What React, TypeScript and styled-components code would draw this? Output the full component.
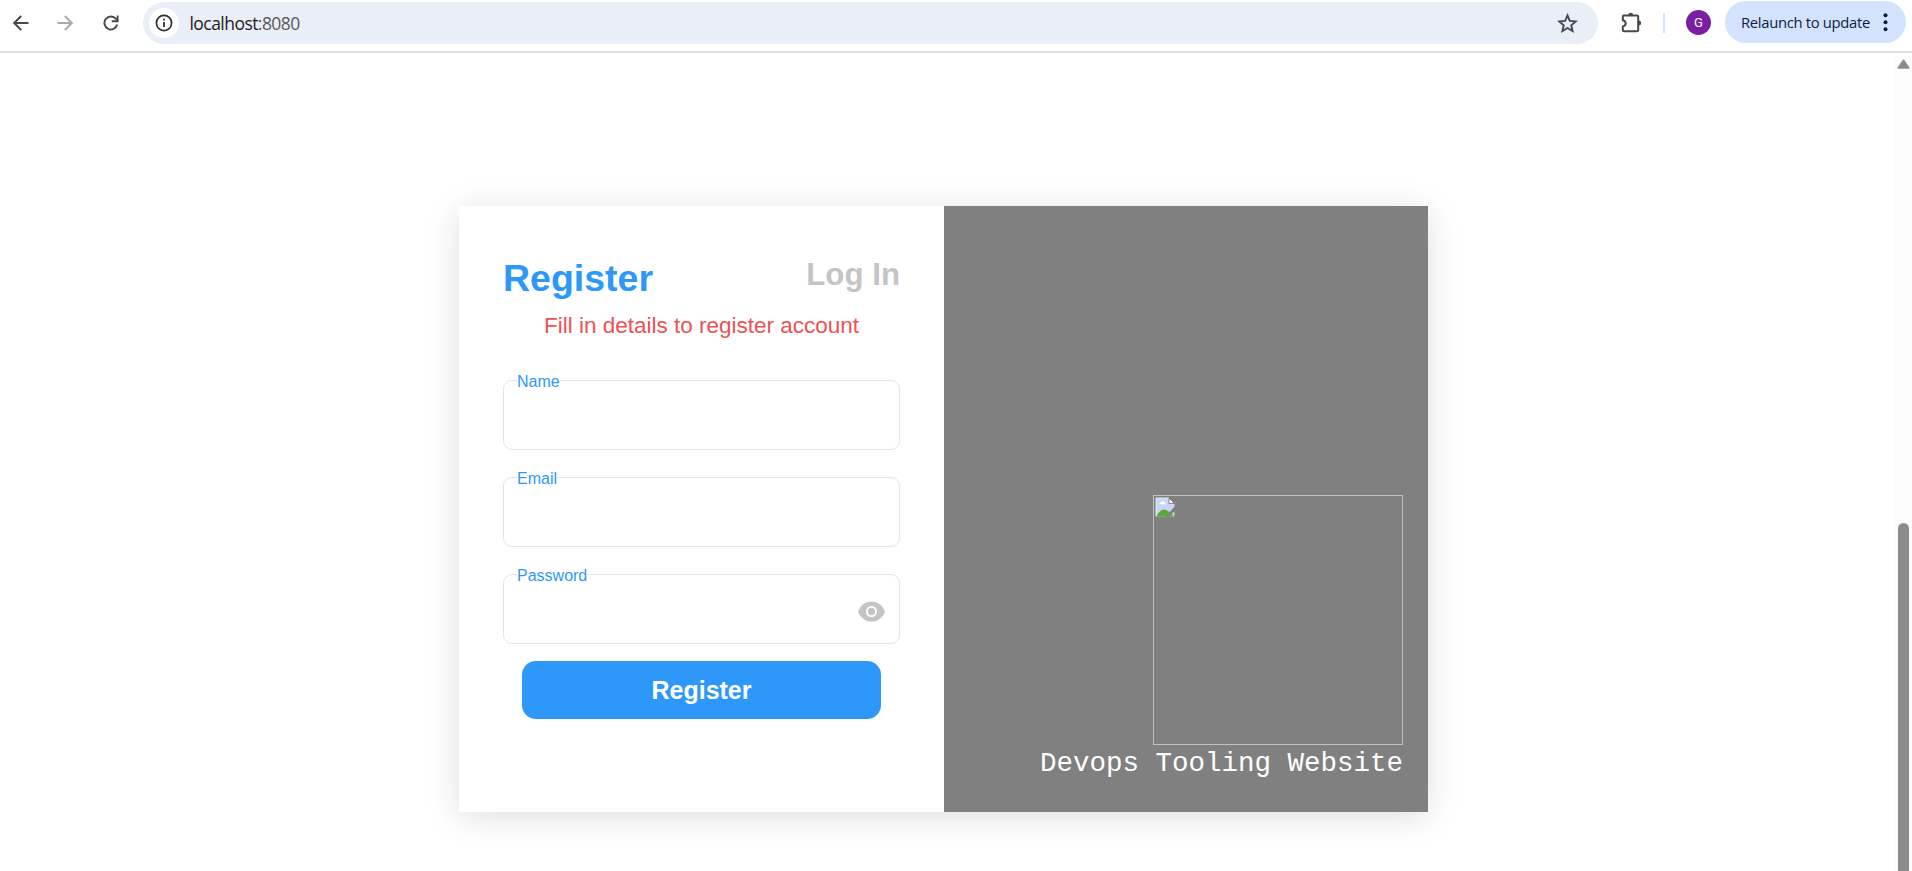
import React from "react";
import styled, { createGlobalStyle } from "styled-components";

const GlobalStyle = createGlobalStyle`
  * { box-sizing: border-box; }
  body { margin: 0; background: #fff; overflow: hidden; }
`;

const sans = `"Liberation Sans", Arial, sans-serif`;
const chromeFont = `"Open Sans", "Noto Sans", sans-serif`;

const Browser = styled.div`
  display: flex;
  flex-direction: column;
  height: 871px;
  font-family: ${sans};
`;

const Toolbar = styled.header`
  display: flex;
  align-items: flex-start;
  flex: none;
  height: 53px;
  padding: 1px 6px 0 8px;
  border-bottom: 2px solid #dfdfdf;
`;

const IconButton = styled.button<{ $color?: string; $width: number }>`
  display: flex;
  align-items: center;
  justify-content: center;
  flex: none;
  width: ${(p) => p.$width}px;
  height: 43px;
  padding: 0;
  border: 0;
  background: none;
  color: ${(p) => p.$color ?? "#47484a"};
`;

const ExtensionsButton = styled(IconButton)`
  padding-left: 3px;
`;

const NavGroup = styled.nav`
  display: flex;
  width: 135px;
  flex: none;
  gap: 21px;
`;

const Omnibox = styled.div`
  display: flex;
  align-items: center;
  flex: none;
  width: 1455px;
  height: 42px;
  margin-top: 1px;
  padding: 0 20px 0 6px;
  border-radius: 21px;
  background: #e9eef7;
`;

const SiteInfo = styled.span`
  display: flex;
  align-items: center;
  justify-content: center;
  width: 30px;
  height: 30px;
  border-radius: 50%;
  background: #fff;
`;

const Address = styled.span`
  flex: 1;
  margin-left: 10.5px;
  font: 17.5px/24px ${chromeFont};
  letter-spacing: -0.55px;
  color: #1f2023;
`;

const Port = styled.span`
  color: #55585d;
`;

const Divider = styled.span`
  flex: none;
  width: 2px;
  height: 20px;
  margin: 12px 21px 0 0;
  background: #d3e3fd;
`;

const Avatar = styled.span`
  flex: none;
  width: 25px;
  height: 25px;
  margin: 9px 14px 0 0;
  border-radius: 50%;
  background: #7b1fa2;
  color: #fff;
  font: 13px/25px Roboto, sans-serif;
  text-align: center;
`;

const Relaunch = styled.button`
  display: flex;
  align-items: center;
  justify-content: space-between;
  flex: none;
  width: 181px;
  height: 42px;
  padding: 0 18px 0 16px;
  border: 0;
  border-radius: 21px;
  background: #d3e3fd;
  color: #0b1d47;
  font: 14.8px/20px ${chromeFont};
  letter-spacing: -0.31px;
  white-space: nowrap;
`;

const Viewport = styled.div`
  display: flex;
  flex: 1;
  min-height: 0;
`;

const Page = styled.main`
  flex: 1;
  padding: 153px 0 0 459px;
`;

const Scrollbar = styled.aside`
  display: flex;
  flex-direction: column;
  align-items: center;
  width: 18px;
  padding: 6px 0 0 1px;
  background: #fcfcfc;
`;

const Thumb = styled.div`
  flex: 1;
  width: 11px;
  margin-top: 454px;
  border-radius: 6px 6px 0 0;
  background: #8b8b8b;
`;

const Card = styled.section`
  display: flex;
  width: 969px;
  height: 606px;
  background: #fff;
  box-shadow: 0 5px 31px rgba(0, 0, 0, 0.13);
`;

const FormPanel = styled.form`
  display: flex;
  flex-direction: column;
  width: 485px;
  padding: 50px 44px 0;
`;

const TabRow = styled.div`
  display: flex;
  justify-content: space-between;
  align-items: flex-start;
  height: 56px;
`;

const Tab = styled.h1<{ $active?: boolean }>`
  margin: 0;
  font-weight: 700;
  font-size: ${(p) => (p.$active ? 37.5 : 31.25)}px;
  line-height: ${(p) => (p.$active ? 44 : 38)}px;
  color: ${(p) => (p.$active ? "#2d98fa" : "#c4c4c4")};
`;

const Hint = styled.p`
  margin: 0 0 40px;
  font-size: 22.5px;
  line-height: 28px;
  text-align: center;
  color: #ec5252;
`;

const Fields = styled.div`
  display: flex;
  flex-direction: column;
  gap: 27px;
`;

const Field = styled.div`
  position: relative;
  display: flex;
  align-items: center;
  justify-content: flex-end;
  height: 70px;
  padding: 4px 14px 0 0;
  border: 1px solid #e4e4e4;
  border-radius: 9px;
`;

const Label = styled.label`
  position: absolute;
  top: -7px;
  left: 13px;
  background: #fff;
  font-size: 16px;
  line-height: 16px;
  color: #2d98fa;
`;

const Submit = styled.button`
  height: 58px;
  margin: 17px 19px 0;
  padding: 0;
  border: 0;
  border-radius: 14px;
  background: #2d98fa;
  color: #fff;
  font: 700 25px/58px ${sans};
`;

const BrandPanel = styled.div`
  display: flex;
  flex-direction: column;
  align-items: flex-end;
  justify-content: flex-end;
  flex: 1;
  padding: 0 25px 30px 0;
  background: #808080;
`;

const MissingImage = styled.div`
  width: 250px;
  height: 250px;
  padding: 1px;
  border: 1px solid #c0c0c0;
`;

const BrokenIcon = styled.svg`
  display: block;
`;

const BrandName = styled.p`
  margin: 1px 0 0;
  font: 27.5px/36px "Liberation Mono", monospace;
  color: #fff;
`;

const Arrow = ({ flip = false }: { flip?: boolean }) => (
  <svg width="16" height="16" viewBox="0 0 16 16" fill="none" stroke="currentColor" strokeWidth="1.9">
    <path d={flip ? "M0.5 8H14.5M7.8 1L14.8 8L7.8 15" : "M15.5 8H1.5M8.2 1L1.2 8L8.2 15"} />
  </svg>
);

const Reload = () => (
  <svg width="16" height="16" viewBox="0 0 16 16" fill="none" stroke="currentColor" strokeWidth="1.9">
    <path d="M14.2 9.6A6.5 6.5 0 1 1 13 3.9L14.5 5.6" />
    <path d="M14.6 0.5V6.2H8.8" />
  </svg>
);

const Info = () => (
  <svg width="18" height="18" viewBox="0 0 18 18" fill="none" stroke="#303134">
    <circle cx="9" cy="9" r="7.6" strokeWidth="1.7" />
    <path d="M9 8V13M9 4.8V6.6" strokeWidth="1.8" />
  </svg>
);

const Star = () => (
  <svg width="21" height="21" viewBox="0 0 19 19" fill="none" stroke="#47484a" strokeWidth="1.7">
    <path d="M9.5 2.2L11.6 7.1L17 7.6L12.9 11.1L14.1 16.4L9.5 13.6L4.9 16.4L6.1 11.1L2 7.6L7.4 7.1Z" />
  </svg>
);

const Puzzle = () => (
  <svg width="22" height="21" viewBox="0 0 22 21">
    <path
      d="M3 3.6H16Q17.2 3.6 17.2 4.8V18Q17.2 19.2 16 19.2H3Q1.8 19.2 1.8 18V14.5Q4.7 13.8 4.7 11.3Q4.7 8.9 1.8 8.2V4.8Q1.8 3.6 3 3.6Z"
      fill="none"
      stroke="#47484a"
      strokeWidth="2"
      strokeLinejoin="round"
    />
    <path d="M7.2 3.2a2.5 2.5 0 0 1 5 0ZM17.6 8.6a2.5 2.5 0 0 1 0 5Z" fill="#47484a" />
  </svg>
);

const Dots = () => (
  <svg width="5" height="19" viewBox="0 0 5 19" fill="currentColor">
    <circle cx="2.5" cy="2.3" r="2" />
    <circle cx="2.5" cy="9.3" r="2" />
    <circle cx="2.5" cy="16.3" r="2" />
  </svg>
);

const Eye = () => (
  <svg width="27" height="21" viewBox="0 0 27 21">
    <path d="M0 10.5C2.2 4.4 7.4 0.4 13.5 0.4S24.8 4.4 27 10.5C24.8 16.6 19.6 20.6 13.5 20.6S2.2 16.6 0 10.5Z" fill="#c4c4c4" />
    <circle cx="13.5" cy="10.5" r="4.6" fill="none" stroke="#fff" strokeWidth="1.8" />
  </svg>
);

const BrokenImage = () => (
  <BrokenIcon width="20" height="20" viewBox="0 0 20 20">
    <path d="M1 1H14L19.5 6.5V11L11 19.5H1Z" fill="#c6d8f5" />
    <path d="M1 19.5V1H14" fill="none" stroke="#e4e8f0" />
    <path d="M4 7.3Q4.3 5.4 6 5.5Q7 3.6 8.6 4.6Q10 4.8 10 6Q11.3 6.2 11.2 7.3Z" fill="#fff" />
    <path d="M1.5 19.4C3 16 6 12.4 9.5 12.6Q12.8 12.9 15 15.5L11 19.4Z" fill="#58ab36" />
    <path d="M14 1V6.5H19.5Z" fill="#fff" stroke="#777" strokeWidth="0.9" />
    <path d="M20 10.8L11.6 19.8" stroke="#808080" strokeWidth="2.2" />
    <path d="M19.3 14.5V19.4H14.3Z" fill="#c6d8f5" />
    <path d="M16.5 16.6L18.8 19.4H14.6Z" fill="#58ab36" />
  </BrokenIcon>
);

const ScrollUp = () => (
  <svg width="13" height="10" viewBox="0 0 13 10">
    <path d="M6.5 1.5L11.5 8.8H1.5Z" fill="#8b8b8b" stroke="#8b8b8b" strokeWidth="2" strokeLinejoin="round" />
  </svg>
);

export default function App() {
  return (
    <Browser>
      <GlobalStyle />
      <Toolbar>
        <NavGroup>
          <IconButton $width={25} aria-label="Back"><Arrow /></IconButton>
          <IconButton $width={22} $color="#a9aaab" aria-label="Forward"><Arrow flip /></IconButton>
          <IconButton $width={27} aria-label="Reload"><Reload /></IconButton>
        </NavGroup>
        <Omnibox>
          <SiteInfo><Info /></SiteInfo>
          <Address>localhost<Port>:8080</Port></Address>
          <Star />
        </Omnibox>
        <ExtensionsButton $width={65} aria-label="Extensions"><Puzzle /></ExtensionsButton>
        <Divider />
        <Avatar>G</Avatar>
        <Relaunch>Relaunch to update<Dots /></Relaunch>
      </Toolbar>
      <Viewport>
        <Page>
          <Card>
            <FormPanel>
              <TabRow>
                <Tab $active>Register</Tab>
                <Tab>Log In</Tab>
              </TabRow>
              <Hint>Fill in details to register account</Hint>
              <Fields>
                <Field><Label>Name</Label></Field>
                <Field><Label>Email</Label></Field>
                <Field><Label>Password</Label><Eye /></Field>
              </Fields>
              <Submit type="button">Register</Submit>
            </FormPanel>
            <BrandPanel>
              <MissingImage><BrokenImage /></MissingImage>
              <BrandName>Devops Tooling Website</BrandName>
            </BrandPanel>
          </Card>
        </Page>
        <Scrollbar>
          <ScrollUp />
          <Thumb />
        </Scrollbar>
      </Viewport>
    </Browser>
  );
}
